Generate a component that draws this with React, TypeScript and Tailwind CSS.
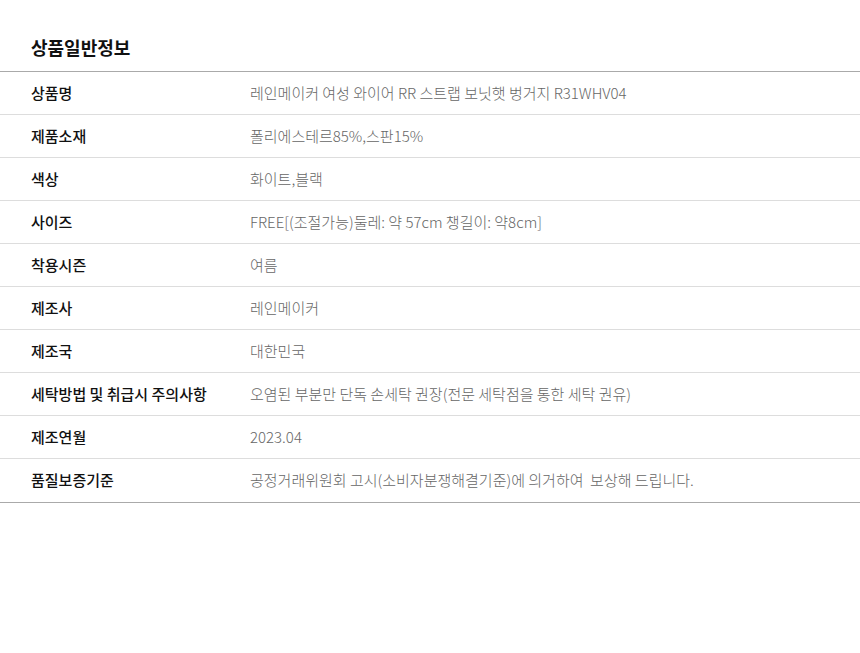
import React from "react";

const rows: [string, string][] = [
  ["상품명", "레인메이커 여성 와이어 RR 스트랩 보닛햇 벙거지 R31WHV04"],
  ["제품소재", "폴리에스테르85%,스판15%"],
  ["색상", "화이트,블랙"],
  ["사이즈", "FREE[(조절가능)둘레: 약 57cm 챙길이: 약8cm]"],
  ["착용시즌", "여름"],
  ["제조사", "레인메이커"],
  ["제조국", "대한민국"],
  ["세탁방법 및 취급시 주의사항", "오염된 부분만 단독 손세탁 권장(전문 세탁점을 통한 세탁 권유)"],
  ["제조연월", "2023.04"],
  ["품질보증기준", "공정거래위원회 고시(소비자분쟁해결기준)에 의거하여  보상해 드립니다."],
];

export default function App() {
  return (
    <div
      className="w-[860px] h-[653px] bg-white"
      style={{ fontFamily: '"Noto Sans CJK KR", "Noto Sans", sans-serif' }}
    >
      <h2 className="pl-[31px] pt-[34px] pb-[11px] text-[18px] leading-[26px] font-bold text-[#111]">
        상품일반정보
      </h2>
      <div className="border-t border-b border-[#aaa]">
        {rows.map(([label, value], i) => (
          <div
            key={label}
            className={`flex items-center h-[43px] ${i < rows.length - 1 ? "border-b border-[#ddd]" : ""}`}
          >
            <div className="w-[250px] pl-[31px] text-[15px] font-medium text-[#111]">{label}</div>
            <div className="flex-1 text-[15px] font-light text-[#666] whitespace-pre">{value}</div>
          </div>
        ))}
      </div>
    </div>
  );
}
